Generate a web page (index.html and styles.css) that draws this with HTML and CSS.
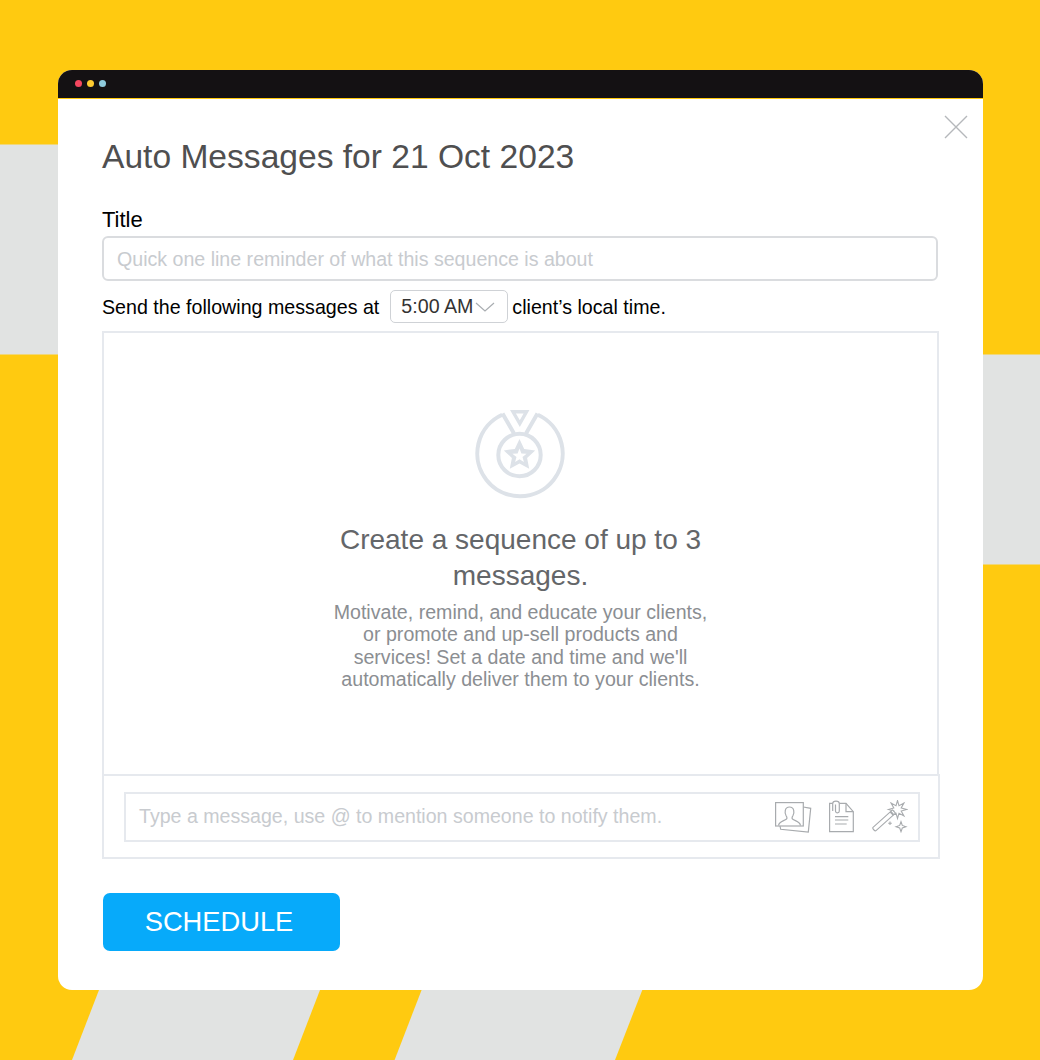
FILE: index.html
```html
<!DOCTYPE html>
<html lang="en">

<head>
    <meta charset="UTF-8">
    <meta name="viewport" content="width=device-width, initial-scale=1.0">
    <title>Auto Messages</title>
    <link rel="stylesheet" href="styles.css">
</head>

<body>
    <!-- yellow page with the grey stripes behind the window -->
    <svg class="backdrop" width="1040" height="1060" viewBox="0 0 1040 1060">
        <rect x="0" y="144.500" width="58" height="210" fill="#e1e3e2"></rect>
        <rect x="983" y="354.500" width="57" height="210" fill="#e1e3e2"></rect>
        <polygon points="99,990 320,990 293,1060 72,1060" fill="#e1e3e2"></polygon>
        <polygon points="421.6,990 642.3,990 615,1060 394.6,1060" fill="#e1e3e2"></polygon>
    </svg>

    <div class="window">
        <div class="titlebar">
            <span class="dot dot-red"></span>
            <span class="dot dot-yellow"></span>
            <span class="dot dot-blue"></span>
        </div>

        <div class="content">
            <svg class="close" width="24" height="24" viewBox="0 0 24 24">
                <path d="M1 1L23 23M23 1L1 23" stroke="#b5b8bb" stroke-width="1.400" fill="none"></path>
            </svg>

            <h1 class="heading">Auto Messages for 21 Oct 2023</h1>

            <label class="field-label">Title</label>
            <div class="title-input">Quick one line reminder of what this sequence is about</div>

            <div class="time-row">
                <span>Send the following messages at</span>
                <span class="time-select">
                    5:00 AM
                    <svg width="20" height="10" viewBox="0 0 20 10">
                        <path d="M1 1L10 9L19 1" stroke="#a9adb1" stroke-width="1.200" fill="none"></path>
                    </svg>
                </span>
                <span>client’s local time.</span>
            </div>

            <div class="panel">
                <svg class="medal" width="92" height="92" viewBox="0 0 92 92">
                    <g fill="none" stroke="#dde2e8" stroke-width="4">
                        <path d="M28.200 6.700A42.700 42.700 0 1 0 63.800 6.700"></path>
                        <circle cx="45.500" cy="47" r="21.200"></circle>
                        <path d="M28.500 5.500L40 25.500M63.500 5.500L52 25.500"></path>
                        <path d="M39 3.800H52.500L45.800 15.500Z" stroke-width="3.400"></path>
                    </g>
                    <path fill="#dde2e8" fill-rule="evenodd" d="M45.500 31L50.200 41L61.200 42.400L53.100 50L55.200 60.800L45.500 55.500L35.800 60.800L37.900 50L29.800 42.400L40.800 41ZM45.500 40.500L43.600 45.400L38.400 45.700L42.500 49L41.100 54.100L45.500 51.200L49.900 54.100L48.500 49L52.600 45.700L47.400 45.400Z"></path>
                </svg>
                <h2 class="panel-title">Create a sequence of up to 3 messages.</h2>
                <p class="panel-text">Motivate, remind, and educate your clients, or promote and up-sell products and services! Set a date and time and we'll automatically deliver them to your clients.</p>
            </div>

            <div class="composer">
                <div class="composer-input">
                    <span class="composer-hint">Type a message, use @ to mention someone to notify them.</span>
                    <svg class="tool" width="37" height="32" viewBox="0 0 37 32">
                        <g fill="none" stroke="#a8abae" stroke-width="1.200">
                            <rect x="0.600" y="1.600" width="27.700" height="23.400"></rect>
                            <path d="M28.300 6L35.700 7.300L33.300 31L5.700 28.300L5 25"></path>
                            <path d="M3.500 24.500C4 20.500 9 20 11.500 18C12.500 17 12 16 11 14.500C9.500 12 9.500 6 14.500 6C19.500 6 19.500 12 18 14.500C17 16 16.500 17 17.500 18C20 20 25 20.500 25.500 24.500"></path>
                        </g>
                    </svg>
                    <svg class="tool" width="26" height="33" viewBox="0 0 26 33">
                        <g fill="none" stroke="#a8abae" stroke-width="1.200">
                            <path d="M3.700 3.300H0.600V31.700H24.300V11.700L17 3.300H10.300"></path>
                            <path d="M17 3.300V11.700H24.300"></path>
                            <path d="M3.700 11V3.500C3.700 0.200 10.300 0.200 10.300 3.500V11C10.300 13.500 6.500 13.500 6.500 11V4.500"></path>
                            <path d="M6 16.700H19.300M6 20H19.300M6 24H17.700"></path>
                        </g>
                    </svg>
                    <svg class="tool" width="36" height="33" viewBox="0 0 36 33">
                        <g fill="#fff" stroke="#a8abae" stroke-width="1.100">
                            <path fill="none" d="M34.500 9.500L29.200 11L31.900 15.900L27 13.200L25.500 18.500L24 13.200L19.100 15.900L21.800 11L16.500 9.500L21.800 8L19.100 3.100L24 5.800L25.500 0.500L27 5.800L31.900 3.100L29.200 8Z"></path>
                            <path stroke-linejoin="round" d="M1 27.400L20.500 9.900L23.500 13.100L4 30.600C3 31.500 0 28.500 1 27.400Z"></path>
                            <path fill="none" stroke-width="2" d="M18.500 11.700L21.500 14.900"></path>
                            <path fill="none" d="M29 21.700L30.300 25.400L34 26.700L30.300 28L29 31.700L27.700 28L24 26.700L27.700 25.400Z"></path>
                            <path fill="none" d="M18 21.500V25.100M16.200 23.300H19.800"></path>
                        </g>
                    </svg>
                </div>
            </div>

            <button class="schedule" type="button">SCHEDULE</button>
        </div>
    </div>
</body>

</html>
```

FILE: styles.css
```css
html,
body {
    margin: 0;
    padding: 0;
}

body {
    position: relative;
    width: 1040px;
    height: 1060px;
    overflow: hidden;
    background-color: #ffca10;
    font-family: "Liberation Sans", Arial, sans-serif;
    padding-top: 70px;
    box-sizing: border-box;
}

.backdrop {
    position: absolute;
    top: 0;
    left: 0;
}

.window {
    position: relative;
    width: 925px;
    height: 920px;
    margin-left: 58px;
    background-color: #fff;
    border-radius: 14px;
    overflow: hidden;
}

.titlebar {
    display: flex;
    align-items: center;
    gap: 5px;
    height: 28px;
    padding-left: 17px;
    background-color: #141113;
    border-bottom: 1px solid #ffca10;
    box-sizing: content-box;
}

.dot {
    width: 7px;
    height: 7px;
    border-radius: 50%;
    margin-top: -1px;
}

.dot-red {
    background-color: #f5475f;
}

.dot-yellow {
    background-color: #fecb30;
}

.dot-blue {
    background-color: #8fcbdc;
}

.content {
    position: relative;
    padding: 0 44px;
}

.close {
    position: absolute;
    top: 16px;
    right: 15px;
}

.heading {
    margin: 0;
    padding-top: 37px;
    font-size: 33.600px;
    line-height: 42px;
    font-weight: normal;
    color: #4f4f50;
}

.field-label {
    display: block;
    margin-top: 29px;
    font-size: 22px;
    line-height: 26px;
    color: #000;
}

.title-input {
    width: 836px;
    height: 45px;
    margin-top: 3px;
    padding-left: 13px;
    border: 2px solid #dadcdf;
    border-radius: 6px;
    box-sizing: border-box;
    font-size: 19.600px;
    line-height: 42px;
    color: #c8cbcf;
}

.time-row {
    display: flex;
    align-items: center;
    height: 33px;
    margin-top: 9px;
    padding-top: 1px;
    box-sizing: border-box;
    font-size: 19.650px;
    color: #000;
}

.time-select {
    display: flex;
    align-items: center;
    gap: 2px;
    width: 118px;
    height: 33px;
    margin: -1px 4px 0 11px;
    padding-left: 10px;
    border: 1px solid #cfd2d6;
    border-radius: 5px;
    box-sizing: border-box;
    color: #333;
}

.panel {
    width: 837px;
    height: 443px;
    margin-top: 8px;
    padding-top: 75px;
    border: 2px solid #e6e9ee;
    border-bottom: 0;
    box-sizing: border-box;
    text-align: center;
}

.medal {
    display: block;
    margin: 0 auto;
    transform: translateX(-1px);
}

.panel-title {
    width: 400px;
    margin: 22px auto 0;
    font-size: 28px;
    line-height: 36px;
    font-weight: normal;
    color: #646669;
}

.panel-text {
    width: 385px;
    margin: 7px auto 0;
    font-size: 19.600px;
    line-height: 22.400px;
    color: #8b8e92;
}

.composer {
    width: 838px;
    height: 85px;
    padding: 16px 18px 0 20px;
    border: 2px solid #e6e9ee;
    box-sizing: border-box;
}

.composer-input {
    display: flex;
    align-items: center;
    height: 50px;
    padding-left: 13px;
    padding-bottom: 1px;
    border: 2px solid #e6e9ee;
    box-sizing: border-box;
}

.composer-hint {
    flex: 1;
    font-size: 19.600px;
    color: #c8cbcf;
}

.tool {
    flex: none;
}

.tool + .tool {
    margin-left: 17px;
}

.tool:last-child {
    margin-left: 17px;
    margin-right: 10px;
}

.schedule {
    display: block;
    width: 237px;
    height: 58px;
    margin: 34px 0 0 1px;
    padding: 0 5px 0 0;
    border: none;
    border-radius: 7px;
    background-color: #07aafa;
    color: #fff;
    font-family: inherit;
    font-size: 27.300px;
    text-align: center;
}
```
